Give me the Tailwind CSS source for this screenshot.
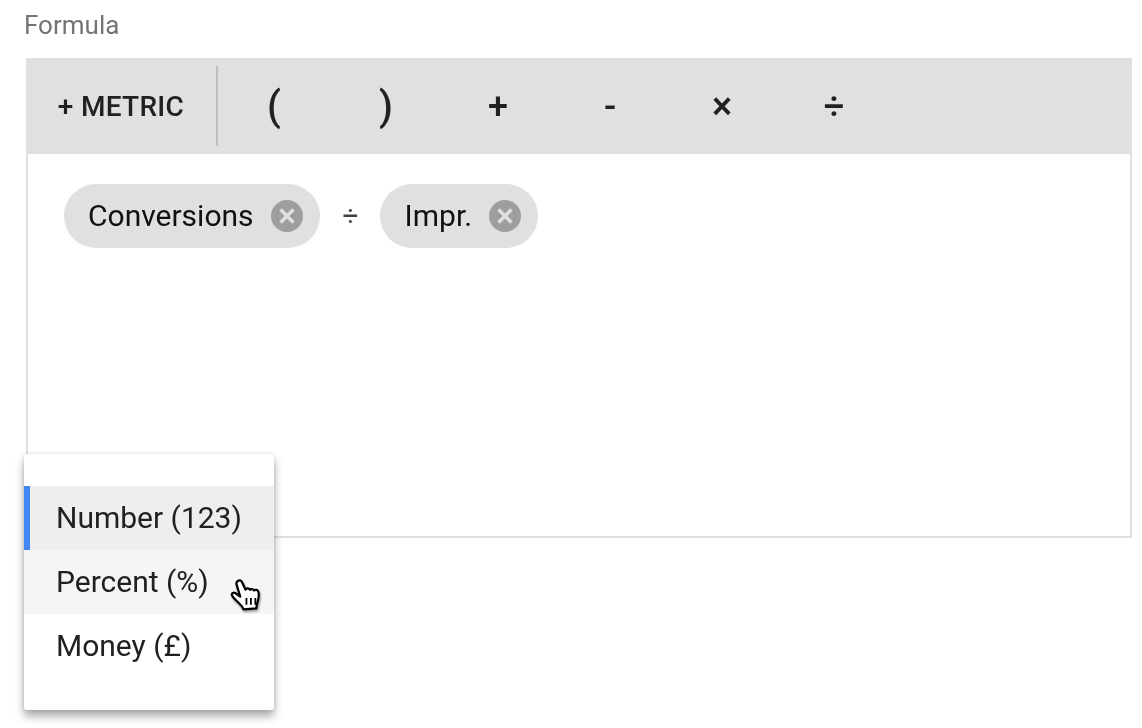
<!DOCTYPE html>
<html lang="en">
<head>
<meta charset="UTF-8">
<title>Formula</title>
<script src="https://cdn.jsdelivr.net/npm/@tailwindcss/browser@4"></script>
</head>
<body class="bg-white font-['Roboto',sans-serif] h-[728px] w-[1142px] overflow-hidden relative opacity-[0.999]">

  <!-- Label -->
  <div class="pl-6 h-[58px] pt-[9px] text-[26px] leading-[32px] text-[#757575]">Formula</div>

  <!-- Editor -->
  <div class="ml-[26px] w-[1106px]">
    <div class="h-24 bg-[#e0e0e0] flex items-center text-[#212121] font-medium">
      <div class="w-[190px] text-center text-[28px] leading-none tracking-[0.3px] pt-0.5">+ METRIC</div>
      <div class="w-0.5 h-20 bg-[#bdbdbd]"></div>
      <div class="w-28 text-center text-[40px] leading-none pt-0.5">(</div>
      <div class="w-28 text-center text-[40px] leading-none pt-0.5">)</div>
      <div class="w-28 text-center text-[36px] leading-none pt-0.5">+</div>
      <div class="w-28 text-center text-[36px] leading-none pt-0.5">-</div>
      <div class="w-28 text-center text-[38px] leading-none">×</div>
      <div class="w-28 text-center text-[36px] leading-none pt-0.5">÷</div>
    </div>
    <div class="h-[384px] border-2 border-t-0 border-[#e0e0e0] pl-9 pt-[30px] flex items-start">
      <div class="h-16 rounded-full bg-[#e0e0e0] pl-6 pr-[17px] flex items-center gap-[17px]">
        <span class="text-[30px] leading-none text-[#111111]">Conversions</span>
        <svg class="w-8 h-8" viewBox="0 0 32 32"><circle cx="16" cy="16" r="16" fill="#9e9e9e"/><path d="M9.500 9.500l13 13M22.500 9.500l-13 13" stroke="#e0e0e0" stroke-width="3.500" fill="none"/></svg>
      </div>
      <div class="w-[60px] h-16 pl-0.5 flex items-center justify-center text-[28px] leading-none text-[#424242]">÷</div>
      <div class="h-16 rounded-full bg-[#e0e0e0] pl-[25px] pr-[17px] flex items-center gap-[17px]">
        <span class="text-[30px] leading-none text-[#111111]">Impr.</span>
        <svg class="w-8 h-8" viewBox="0 0 32 32"><circle cx="16" cy="16" r="16" fill="#9e9e9e"/><path d="M9.500 9.500l13 13M22.500 9.500l-13 13" stroke="#e0e0e0" stroke-width="3.500" fill="none"/></svg>
      </div>
    </div>
  </div>

  <!-- Format menu -->
  <div class="absolute left-6 top-[454px] w-[250px] py-8 bg-white rounded-[3px] shadow-[0_6px_10px_rgba(0,0,0,0.35),0_0_4px_rgba(0,0,0,0.12)] text-[30px] leading-none text-[#212121]">
    <div class="h-16 flex items-center pl-[26px] bg-[#eeeeee] border-l-[6px] border-[#4285f4]">Number (123)</div>
    <div class="h-16 flex items-center pl-8 bg-[#f5f5f5]">Percent (%)</div>
    <div class="h-16 flex items-center pl-8">Money (£)</div>
  </div>

  <!-- Mouse pointer -->
  <svg class="absolute left-[229px] top-[578px] w-[36px] h-[40px] drop-shadow-[1px_2px_1px_rgba(0,0,0,0.35)]" viewBox="0 0 32 36">
    <path d="M8 2.500c1.500-1 3 0 3.700 1.600l3 6.400c.6-1.600 3.200-1.600 4 .2.8-1.200 3-1 3.700.6 1-1 3.200-.8 3.800 1 .8 2.400.3 6-.6 9-.6 2-1 3.500-1.200 6l-11.500 1c-1-3-3-4.500-5.500-7-1.700-1.700-4.500-4-5-6-.3-1.500 1.500-2.500 3-1.800l4.500 3.300L6.500 5.500C6.200 4.500 7 3.200 8 2.500z" fill="#fff" stroke="#000" stroke-width="2" stroke-linejoin="round"/>
    <path d="M15.500 18v6M19.500 18v6M23.500 18v6" stroke="#000" stroke-width="1.600" fill="none"/>
  </svg>

</body>
</html>
